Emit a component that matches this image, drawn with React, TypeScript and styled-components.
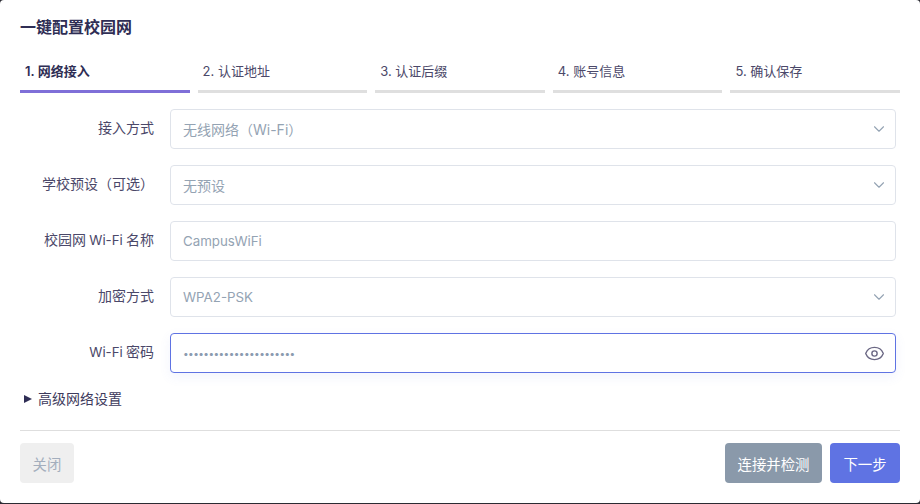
import type { ReactNode } from "react";
import styled, { createGlobalStyle } from "styled-components";
import { ChevronDown, Eye } from "lucide-react";

const GlobalStyle = createGlobalStyle`
  html, body {
    margin: 0;
    padding: 0;
    background: #2b2b33;
  }
  * {
    box-sizing: border-box;
  }
`;

const Modal = styled.div`
  width: 920px;
  height: 503px;
  background: #fff;
  border-radius: 4px;
  padding: 15px 20px 20px;
  display: flex;
  flex-direction: column;
  font-family: Inter, "Noto Sans CJK SC", sans-serif;
  color: #3d3a5c;
  overflow: hidden;
`;

const Title = styled.h2`
  margin: 0;
  font-size: 16px;
  line-height: 24px;
  font-weight: 600;
  color: #2f2e55;
`;

const Steps = styled.div`
  display: grid;
  grid-template-columns: repeat(5, 1fr);
  gap: 8px;
  margin-top: 11px;
`;

const Step = styled.div<{ $active?: boolean }>`
  height: 43px;
  padding: 11px 0 0 5px;
  font-size: 13px;
  line-height: 20px;
  font-weight: ${(p) => (p.$active ? 600 : 400)};
  color: ${(p) => (p.$active ? "#2f2e55" : "#4b4869")};
  border-bottom: 3px solid ${(p) => (p.$active ? "#7f6fd8" : "#dfdfdf")};
`;

const Form = styled.div`
  display: flex;
  flex-direction: column;
  gap: 16px;
  margin-top: 16px;
`;

const Row = styled.div`
  display: flex;
  align-items: center;
  gap: 16px;
  padding-right: 4px;
`;

const Label = styled.label`
  width: 134px;
  text-align: right;
  font-size: 14px;
  line-height: 20px;
  word-spacing: -0.75px;
  color: #4b4869;
  margin-top: -3px;
`;

const Latin = styled.span`
  font-size: 0.95em;
`;

const Field = styled.div<{ $focus?: boolean }>`
  flex: 1;
  height: 40px;
  display: flex;
  align-items: center;
  justify-content: space-between;
  padding: 0 12px;
  background: #fff;
  border: 1px solid ${(p) => (p.$focus ? "#5f73e3" : "#dfe3ea")};
  border-radius: 4px;
  font-size: 14px;
  color: #94a3b3;
  box-shadow: ${(p) => (p.$focus ? "0 4px 12px rgba(95, 115, 227, 0.08)" : "none")};
`;

const Chevron = styled(ChevronDown)`
  margin-right: -5px;
`;

const EyeIcon = styled(Eye)`
  margin-right: -2px;
`;

const Dots = styled.span`
  font-size: 10px;
  letter-spacing: -0.55px;
  color: #8b9bb0;
`;

const Advanced = styled.div`
  display: flex;
  align-items: center;
  gap: 6px;
  margin-top: 16px;
  padding-left: 4px;
  font-size: 14px;
  line-height: 20px;
  color: #3d3a5c;
`;

const Triangle = styled.span`
  width: 0;
  height: 0;
  border-left: 8px solid #2f2e55;
  border-top: 4.5px solid transparent;
  border-bottom: 4.5px solid transparent;
`;

const Footer = styled.div`
  display: flex;
  align-items: center;
  justify-content: space-between;
  margin-top: 21px;
  padding-top: 12px;
  border-top: 1px solid #dedede;
`;

const Actions = styled.div`
  display: flex;
  gap: 8px;
`;

const Button = styled.button<{ $bg: string; $color: string }>`
  height: 40px;
  min-width: 54px;
  padding: 0 12.5px;
  border: none;
  border-radius: 4px;
  font-family: inherit;
  font-size: 14.4px;
  background: ${(p) => p.$bg};
  color: ${(p) => p.$color};
`;

const NextButton = styled(Button)`
  min-width: 70px;
`;

const fields: { label: ReactNode; value: ReactNode; select?: boolean }[] = [
  { label: "接入方式", value: "无线网络（Wi-Fi）", select: true },
  { label: "学校预设（可选）", value: "无预设", select: true },
  {
    label: (
      <>
        校园网 <Latin>Wi-Fi</Latin> 名称
      </>
    ),
    value: <Latin>CampusWiFi</Latin>,
  },
  { label: "加密方式", value: <Latin>WPA2-PSK</Latin>, select: true },
];

const steps = ["1. 网络接入", "2. 认证地址", "3. 认证后缀", "4. 账号信息", "5. 确认保存"];

export default function App() {
  return (
    <>
      <GlobalStyle />
      <Modal>
        <Title>一键配置校园网</Title>
        <Steps>
          {steps.map((s, i) => (
            <Step key={s} $active={i === 0}>
              {s}
            </Step>
          ))}
        </Steps>
        <Form>
          {fields.map((f, i) => (
            <Row key={i}>
              <Label>{f.label}</Label>
              <Field>
                {f.value}
                {f.select && <Chevron size={18} color="#94a3b3" strokeWidth={1.5} />}
              </Field>
            </Row>
          ))}
          <Row>
            <Label>
              <Latin>Wi-Fi</Latin> 密码
            </Label>
            <Field $focus>
              <Dots>{"•".repeat(22)}</Dots>
              <EyeIcon size={21} color="#6b6884" strokeWidth={1.6} />
            </Field>
          </Row>
        </Form>
        <Advanced>
          <Triangle />
          高级网络设置
        </Advanced>
        <Footer>
          <Button $bg="#efefef" $color="#a3aebd">
            关闭
          </Button>
          <Actions>
            <Button $bg="#8a99aa" $color="#fff">
              连接并检测
            </Button>
            <NextButton $bg="#5f73e3" $color="#fff">
              下一步
            </NextButton>
          </Actions>
        </Footer>
      </Modal>
    </>
  );
}
